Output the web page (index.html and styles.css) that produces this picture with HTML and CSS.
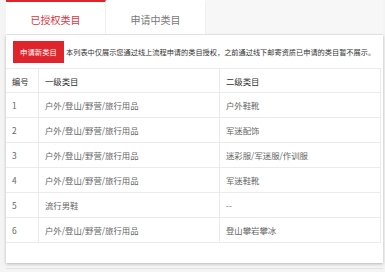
FILE: index.html
```html
<!DOCTYPE html>
<html lang="zh-CN">
<head>
    <meta charset="UTF-8">
    <meta name="viewport" content="width=device-width, initial-scale=1.0">
    <title>类目管理</title>
    <link rel="stylesheet" href="styles.css">
</head>
<body>
    <div class="page">
        <!-- 标签页 -->
        <div class="tabs">
            <div class="tab active">已授权类目</div>
            <div class="tab">申请中类目</div>
        </div>

        <div class="panel">
            <!-- 工具栏 -->
            <div class="toolbar">
                <button class="btn">申请新类目</button>
                <span class="tip">本列表中仅展示您通过线上流程申请的类目授权，之前通过线下邮寄资质已申请的类目暂不展示。</span>
            </div>

            <!-- 类目列表 -->
            <table class="cat-table">
                <thead>
                    <tr>
                        <th class="col-no">编号</th>
                        <th class="col-first">一级类目</th>
                        <th>二级类目</th>
                    </tr>
                </thead>
                <tbody>
                    <tr><td>1</td><td>户外/登山/野营/旅行用品</td><td>户外鞋靴</td></tr>
                    <tr><td>2</td><td>户外/登山/野营/旅行用品</td><td>军迷配饰</td></tr>
                    <tr><td>3</td><td>户外/登山/野营/旅行用品</td><td>迷彩服/军迷服/作训服</td></tr>
                    <tr><td>4</td><td>户外/登山/野营/旅行用品</td><td>军迷鞋靴</td></tr>
                    <tr><td>5</td><td>流行男鞋</td><td>--</td></tr>
                    <tr><td>6</td><td>户外/登山/野营/旅行用品</td><td>登山攀岩攀冰</td></tr>
                </tbody>
            </table>
        </div>
        <div class="footer-line"></div>
    </div>
</body>
</html>
```

FILE: styles.css
```css
body {
    margin: 0;
    padding: 0;
    background: #f4f4f4;
    color: #666;
    font-family: 'Noto Sans CJK SC', 'Liberation Sans', sans-serif;
    overflow: hidden;
}

.page {
    padding: 0 2px 0 6px;
}

.tabs {
    display: flex;
    height: 35px;
    background: #f7f7f7;
    border-bottom: 1px solid #ececec;
    box-sizing: border-box;
}

.tab {
    width: 100px;
    display: flex;
    align-items: center;
    justify-content: center;
    background: #fff;
    border-top: 2px solid transparent;
    border-right: 1px solid #f0f0f0;
    box-sizing: border-box;
    font-size: 10px;
    color: #777;
    padding-top: 2px;
}

.tab.active {
    border-top-color: #e0242b;
    color: #d9363e;
}

.panel {
    background: #fff;
    box-shadow: 0 1px 3px rgba(0, 0, 0, 0.25);
    padding-bottom: 20px;
}

.toolbar {
    display: flex;
    align-items: center;
    height: 33px;
    padding-left: 7px;
    white-space: nowrap;
    overflow: hidden;
}

.btn {
    height: 22px;
    width: 51px;
    padding: 0;
    border: none;
    background: #e0242b;
    color: #fff;
    font-family: inherit;
    font-size: 7.4px;
    margin-right: 2px;
    flex-shrink: 0;
}

.tip {
    font-size: 7.2px;
    color: #333;
}

.cat-table {
    width: 375px;
    border-collapse: collapse;
    font-size: 8.4px;
}

.cat-table th,
.cat-table td {
    border: 1px solid #ebebeb;
    text-align: left;
    padding: 0 0 0 6px;
    height: 24px;
    font-weight: normal;
}

.cat-table th {
    color: #333;
    height: 23px;
}

.cat-table tr > :first-child {
    border-left: none;
}

.col-no {
    width: 26px;
}

.col-first {
    width: 174px;
}

.footer-line {
    margin-top: 5px;
    height: 1px;
    background: #e2e2e2;
}
```
